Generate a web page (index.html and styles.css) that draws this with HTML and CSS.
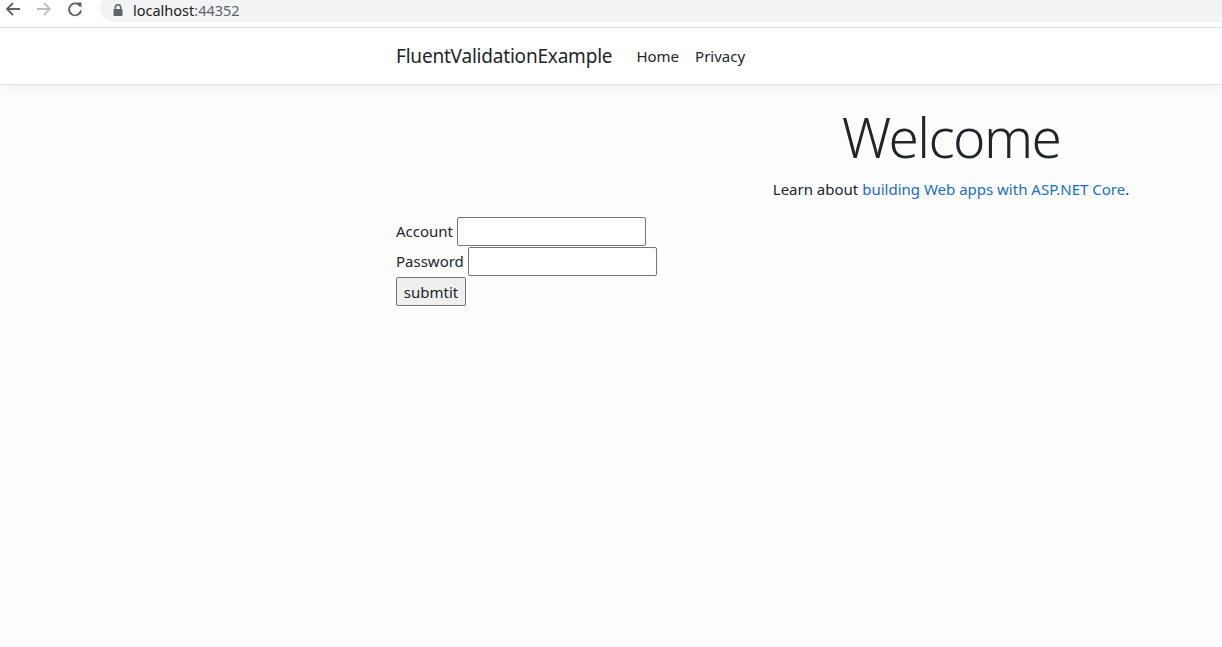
FILE: index.html
```html
<!DOCTYPE html>
<html lang="en">
<head>
<meta charset="utf-8">
<title>Home Page - FluentValidationExample</title>
<link rel="stylesheet" href="styles.css">
</head>
<body>
<div class="chrome">
  <div class="chrome-btns">
    <svg class="cbtn" width="16" height="16" viewBox="0 0 16 16"><path d="M15 8H2.5M8 2L2 8l6 6" fill="none" stroke="#5f6368" stroke-width="1.8"/></svg>
    <svg class="cbtn" width="16" height="16" viewBox="0 0 16 16"><path d="M1 8h12.5M8 2l6 6-6 6" fill="none" stroke="#bdc1c6" stroke-width="1.8"/></svg>
    <svg class="cbtn" width="16" height="16" viewBox="0 0 16 16"><path d="M13.2 5.2A6 6 0 1 0 14 9.5" fill="none" stroke="#5f6368" stroke-width="1.9"/><path d="M9.5 1.5h5v5z" fill="#5f6368"/></svg>
  </div>
  <div class="omnibox">
    <svg class="lock" width="10" height="12" viewBox="0 0 10 12"><path d="M2.3 5V3.5a2.7 2.7 0 0 1 5.4 0V5" fill="none" stroke="#5f6368" stroke-width="1.5"/><rect x="0.5" y="5" width="9" height="7" rx="1" fill="#5f6368"/></svg>
    <span class="host">localhost</span><span class="port">:44352</span>
  </div>
</div>
<div class="page">
  <header class="navbar">
    <div class="container nav-inner">
      <a class="brand" href="#">FluentValidationExample</a>
      <nav class="nav">
        <a class="nav-link" href="#">Home</a>
        <a class="nav-link" href="#">Privacy</a>
      </nav>
    </div>
  </header>
  <main class="container">
    <div class="hero">
      <h1 class="display">Welcome</h1>
      <p class="lead-p">Learn about <a href="#">building Web apps with ASP.NET Core</a>.</p>
    </div>
    <form class="form">
      <div class="frow"><label for="acc">Account</label> <input id="acc" type="text"></div>
      <div class="frow"><label for="pwd">Password</label> <input id="pwd" type="password"></div>
      <div class="frow"><button type="submit">submtit</button></div>
    </form>
  </main>
</div>
</body>
</html>
```

FILE: styles.css
```css
* { box-sizing: border-box; }
html, body { margin: 0; padding: 0; }
body {
  background: #fdfdfd;
  overflow: hidden;
  height: 647px;
  font-family: "Noto Sans", "Open Sans", sans-serif;
  color: #212529;
}
.chrome {
  height: 28px;
  background: #fff;
  border-bottom: 1px solid #dadce0;
  display: flex;
  align-items: flex-start;
  overflow: hidden;
}
.chrome-btns {
  display: flex;
  gap: 15px;
  padding: 1px 0 0 5px;
  width: 100px;
}
.cbtn { display: block; }
.omnibox {
  flex: 1;
  margin-top: -6px;
  height: 28px;
  background: #f1f3f4;
  border-radius: 14px 0 0 14px;
  display: flex;
  align-items: center;
  padding: 6px 0 0 13px;
  font-family: "Noto Sans", "Open Sans", sans-serif;
  font-size: 14.5px;
}
.lock { margin-right: 10px; margin-top: -3px; }
.host { color: #202124; margin-top: -3px; }
.port { color: #5f6368; margin-top: -3px; }
.page { background: #fdfdfd; overflow: hidden; }
.navbar {
  background: #fff;
  border-bottom: 1px solid #e5e5e5;
  box-shadow: 0 4px 12px rgba(0,0,0,0.05);
  height: 57px;
  margin-bottom: 16px;
}
.container {
  width: 1110px;
  margin-left: 396px;
}
.nav-inner {
  display: flex;
  align-items: center;
  height: 56px;
}
.brand {
  font-size: 19px;
  color: #212529;
  text-decoration: none;
  margin-right: 16px;
  letter-spacing: -0.2px;
}
.nav { display: flex; }
.nav-link {
  font-size: 15px;
  color: #212529;
  text-decoration: none;
  padding: 0 8px;
}
.hero { text-align: center; }
.display {
  font-size: 55px;
  font-weight: 300;
  line-height: 66px;
  margin: 0 0 7px;
  padding-top: 3px;
  letter-spacing: -1.6px;
}
.lead-p {
  font-size: 15px;
  line-height: 24px;
  margin: 0 0 16px;
}
.lead-p a { color: #1b6ec2; text-decoration: none; }
.form { font-size: 15px; }
.frow { height: 30px; display: flex; align-items: flex-start; }
.frow label { line-height: 29px; margin-right: 4px; }
.frow input {
  width: 189px;
  height: 29px;
  border: 1px solid #767676;
  border-radius: 2px;
  background: #fff;
  margin: 0;
  font: inherit;
}
.frow button {
  width: 70px;
  height: 29px;
  font: inherit;
  font-size: 15px;
  color: #212529;
  background: #efefef;
  border: 1px solid #767676;
  border-radius: 2px;
  padding: 0;
  margin: 0;
}
```
